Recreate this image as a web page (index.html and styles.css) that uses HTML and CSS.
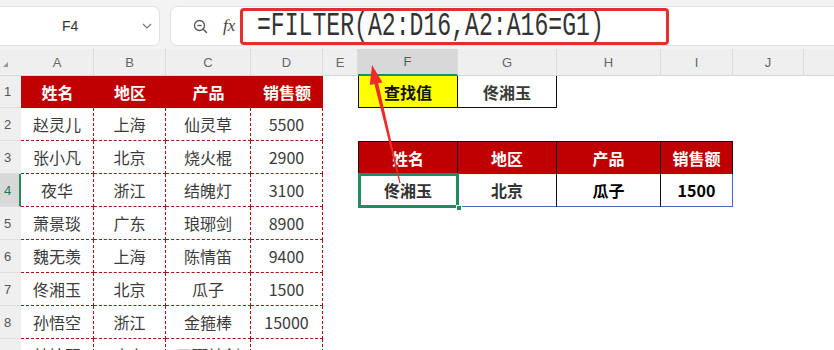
FILE: index.html
```html
<!DOCTYPE html>
<html lang="zh">
<head>
<meta charset="utf-8">
<title>FILTER</title>
<link rel="stylesheet" href="styles.css">
</head>
<body>
<div class="app">
  <div class="topbar">
    <div class="namebox">
      <span class="cellref">F4</span>
      <svg class="chev" width="10" height="6" viewBox="0 0 10 6"><path d="M1 1 L5 5 L9 1" fill="none" stroke="#777" stroke-width="1.2"/></svg>
    </div>
    <div class="formulabox">
      <svg class="zoomi" width="15" height="15" viewBox="0 0 15 15"><circle cx="6.5" cy="6.5" r="5" fill="none" stroke="#555" stroke-width="1.3"/><path d="M4.3 6.5 H8.7" stroke="#555" stroke-width="1.3"/><path d="M10.2 10.2 L13.5 13.5" stroke="#555" stroke-width="1.4" stroke-linecap="round"/></svg>
      <span class="fx">fx</span>
      <div class="highlight">
        <span class="sep"></span>
        <span class="formula">=FILTER(A2:D16,A2:A16=G1)</span>
      </div>
    </div>
  </div>

  <div class="sheet">
    <div class="corner"><span class="tri"></span></div>
    <div class="ch">A</div><div class="ch">B</div><div class="ch">C</div><div class="ch">D</div><div class="ch">E</div>
    <div class="ch sel">F</div><div class="ch">G</div><div class="ch">H</div><div class="ch">I</div><div class="ch">J</div><div class="ch last"></div>

    <div class="rh">1</div>
    <div class="hd">姓名</div><div class="hd">地区</div><div class="hd">产品</div><div class="hd">销售额</div>
    <div class="e"></div>
    <div class="find">查找值</div><div class="val">佟湘玉</div>
    <div class="e"></div><div class="e"></div><div class="e"></div><div class="e"></div>

    <div class="rh">2</div>
    <div class="d">赵灵儿</div><div class="d">上海</div><div class="d">仙灵草</div><div class="d">5500</div>
    <div class="e"></div><div class="e"></div><div class="e"></div><div class="e"></div><div class="e"></div><div class="e"></div><div class="e"></div>

    <div class="rh">3</div>
    <div class="d">张小凡</div><div class="d">北京</div><div class="d">烧火棍</div><div class="d">2900</div>
    <div class="e"></div>
    <div class="th2 first">姓名</div><div class="th2">地区</div><div class="th2">产品</div><div class="th2">销售额</div>
    <div class="e"></div><div class="e"></div>

    <div class="rh sel">4</div>
    <div class="d">夜华</div><div class="d">浙江</div><div class="d">结魄灯</div><div class="d">3100</div>
    <div class="e"></div>
    <div class="r2 first selected">佟湘玉<span class="handle"></span></div><div class="r2">北京</div><div class="r2 black">瓜子</div><div class="r2 black lastcol">1500</div>
    <div class="e"></div><div class="e"></div>

    <div class="rh">5</div>
    <div class="d">萧景琰</div><div class="d">广东</div><div class="d">琅琊剑</div><div class="d">8900</div>
    <div class="e"></div><div class="e"></div><div class="e"></div><div class="e"></div><div class="e"></div><div class="e"></div><div class="e"></div>

    <div class="rh">6</div>
    <div class="d">魏无羡</div><div class="d">上海</div><div class="d">陈情笛</div><div class="d">9400</div>
    <div class="e"></div><div class="e"></div><div class="e"></div><div class="e"></div><div class="e"></div><div class="e"></div><div class="e"></div>

    <div class="rh">7</div>
    <div class="d">佟湘玉</div><div class="d">北京</div><div class="d">瓜子</div><div class="d">1500</div>
    <div class="e"></div><div class="e"></div><div class="e"></div><div class="e"></div><div class="e"></div><div class="e"></div><div class="e"></div>

    <div class="rh">8</div>
    <div class="d">孙悟空</div><div class="d">浙江</div><div class="d">金箍棒</div><div class="d">15000</div>
    <div class="e"></div><div class="e"></div><div class="e"></div><div class="e"></div><div class="e"></div><div class="e"></div><div class="e"></div>

    <div class="rh">9</div>
    <div class="d">林惊羽</div><div class="d">广东</div><div class="d">天琊神剑</div><div class="d">7800</div>
    <div class="e"></div><div class="e"></div><div class="e"></div><div class="e"></div><div class="e"></div><div class="e"></div><div class="e"></div>
  </div>

  <svg class="arrow" width="834" height="350" viewBox="0 0 834 350">
    <polygon points="372,65 382.5,82.5 378.2,83.2 400.6,183 399.4,183.2 374.4,84 369.8,85" fill="#ee2b2b"/>
  </svg>
</div>
</body>
</html>
```

FILE: styles.css
```css
* { box-sizing: border-box; }
html, body { margin: 0; padding: 0; }
body {
  width: 834px;
  height: 350px;
  overflow: hidden;
  background: #ffffff;
  font-family: "Noto Sans CJK SC", "Noto Sans", sans-serif;
}
.app { position: relative; width: 834px; height: 350px; overflow: hidden; }

/* ---------- top formula bar ---------- */
.topbar {
  height: 49px;
  background: #f3f3f3;
  display: flex;
  align-items: flex-start;
  padding-top: 6px;
}
.namebox {
  margin-left: -12px;
  width: 172px;
  height: 40px;
  background: #fff;
  border: 1px solid #e2e2e2;
  border-radius: 7px;
  display: flex;
  align-items: center;
}
.cellref {
  margin-left: 73px;
  font-family: "Liberation Sans", Arial, sans-serif;
  font-size: 14px;
  color: #333;
}
.chev { margin-left: auto; margin-right: 7px; }
.formulabox {
  margin-left: 10px;
  margin-right: -12px;
  flex: 1;
  height: 40px;
  background: #fff;
  border: 1px solid #e2e2e2;
  border-radius: 7px;
  display: flex;
  align-items: center;
}
.zoomi { margin-left: 22px; }
.fx {
  margin-left: 15px;
  font-family: "Liberation Serif", serif;
  font-style: italic;
  font-size: 17px;
  color: #444;
  width: 17px;
}
.highlight {
  margin-left: 0;
  width: 429px;
  height: 37px;
  border: 3px solid #e62e2e;
  border-radius: 4px;
  display: flex;
  align-items: center;
  overflow: hidden;
}
.sep {
  margin-left: 8px;
  width: 1px;
  height: 22px;
  background: #cfcfcf;
}
.formula {
  margin-left: 6px;
  font-family: "Liberation Mono", monospace;
  font-size: 34px;
  line-height: 34px;
  color: #333;
  white-space: nowrap;
  display: inline-block;
  transform: scaleX(0.68);
  transform-origin: left center;
  margin-top: -1px;
}

/* ---------- sheet grid ---------- */
.sheet {
  display: grid;
  grid-template-columns: 21px 73px 72px 85px 72px 35px 100px 99px 104px 72px 71px 1fr;
  grid-template-rows: 27px 32px repeat(8, 33px);
  font-size: 16px;
}
.sheet > div {
  display: flex;
  align-items: center;
  justify-content: center;
  white-space: nowrap;
  overflow: hidden;
}
.corner {
  background: #efefef;
  border-bottom: 1px solid #d6d6d6;
  position: relative;
}
.tri {
  position: absolute;
  left: 3px;
  top: 13px;
  width: 0;
  height: 0;
  border-left: 5px solid transparent;
  border-bottom: 5px solid #9a9a9a;
}
.ch {
  background: #efefef;
  border-right: 1px solid #dcdcdc;
  border-bottom: 1px solid #d6d6d6;
  color: #666;
  font-family: "Liberation Sans", Arial, sans-serif;
  font-size: 13px;
}
.ch.last { border-right: none; }
.ch.sel {
  background: #d8d8d8;
  color: #1d7a50;
  border-bottom: 2px solid #1f8d5f;
}
.sheet > .rh {
  justify-content: flex-start;
  padding-left: 4px;
  background: #efefef;
  border-bottom: 1px solid #e0e0e0;
  color: #555;
  font-family: "Liberation Sans", Arial, sans-serif;
  font-size: 13px;
}
.sheet > .rh.sel {
  background: #d8d8d8;
  color: #1d7a50;
  border-right: 2px solid #1f8d5f;
}
.hd {
  background: #c00000;
  color: #fff;
  font-weight: bold;
}
.d {
  color: #3b3b3b;
  border-right: 1px dashed #a51515;
  border-bottom: 1px dashed #a51515;
}
.find {
  background: #ffff00;
  border: 1px solid #111;
  border-top: none;
  color: #111;
  font-weight: bold;
}
.val {
  border-right: 1px solid #111;
  border-bottom: 1px solid #111;
  color: #3a3a3a;
  font-weight: bold;
}
.th2 {
  background: #c00000;
  color: #fff;
  font-weight: bold;
  border-top: 1px solid #111;
  border-right: 1px solid #111;
}
.th2.first { border-left: 1px solid #111; }
.r2 {
  font-weight: bold;
  color: #333;
  border-right: 1px solid #111;
  border-bottom: 1px solid #4a68bd;
}
.r2.black { color: #000; }
.r2.lastcol { border-right: 1px solid #4a68bd; }
.r2.first { border-left: 1px solid #4a68bd; }
.sheet > .selected {
  position: relative;
  overflow: visible;
}
.selected::after {
  content: "";
  position: absolute;
  left: -1px;
  top: -1px;
  right: -2px;
  bottom: -2px;
  border: 3px solid #1f8d5f;
}
.handle {
  position: absolute;
  right: -5px;
  bottom: -5px;
  width: 6px;
  height: 6px;
  background: #1f8d5f;
  border: 1px solid #fff;
  z-index: 2;
}

/* ---------- annotation arrow ---------- */
.arrow {
  position: absolute;
  left: 0;
  top: 0;
  pointer-events: none;
}
```
